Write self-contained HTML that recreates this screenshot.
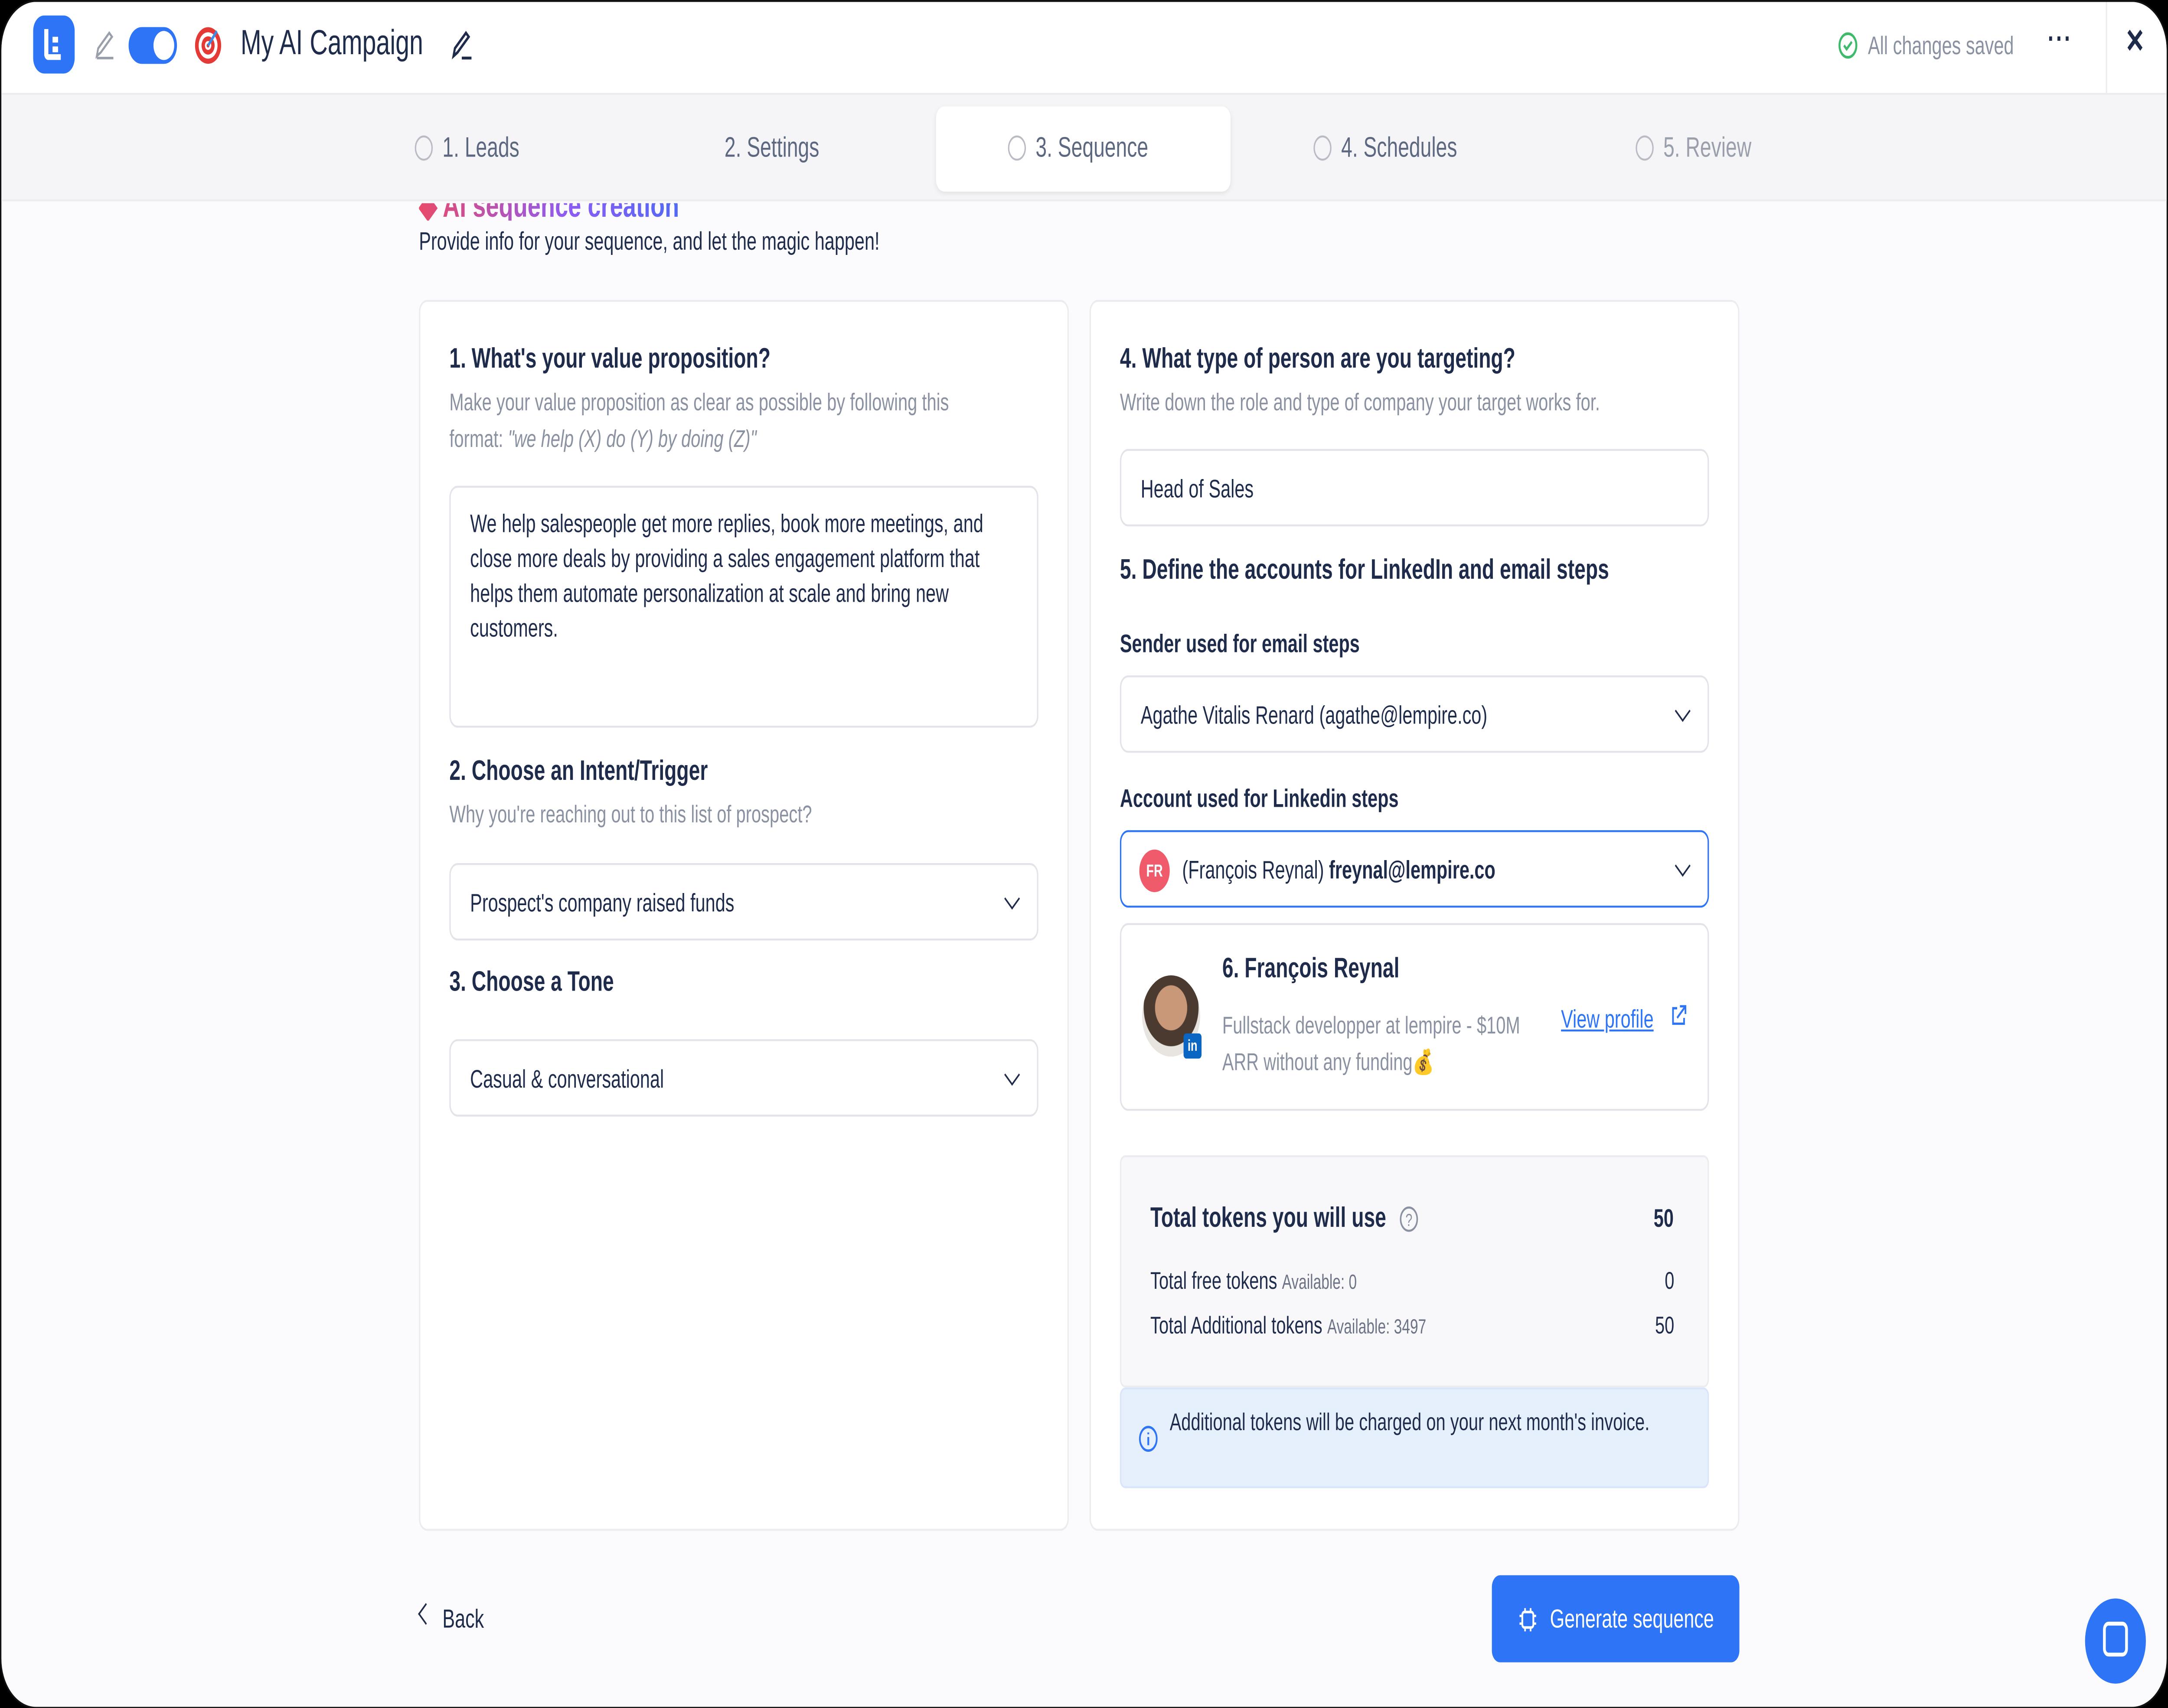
<!DOCTYPE html>
<html><head><meta charset="utf-8"><style>
*{box-sizing:border-box;margin:0;padding:0}
html,body{width:100%;height:100%;overflow:hidden;background:#000}
#w{position:absolute;left:0;top:0;width:1568px;height:882.6px;transform:scale(4.46429);transform-origin:0 0;font-family:"Liberation Sans",sans-serif;color:#1e2b4a}
#frame{position:absolute;left:0;top:0;width:1568px;height:882.6px;background:#fbfafc;border-radius:26px;overflow:hidden;border:1.5px solid #111}
.a{position:absolute}
.top{left:0;top:0;width:1568px;height:48px;background:#fff;border-bottom:1px solid #ececf0}
.steps{left:0;top:48px;width:1568px;height:55px;background:#f5f4f7;border-bottom:1px solid #ededf0}
.st{position:absolute;top:68px;font-size:14.5px;color:#5d6880}
.circ{display:inline-block;width:13px;height:13px;border:1.3px solid #b9bcc4;border-radius:50%;vertical-align:-2px;margin-right:7px}
.card{background:#fff;border:1px solid #ececf0;border-radius:6px}
.h{font-size:14.5px;font-weight:bold;color:#1e2b4a}
.sub{font-size:12.5px;color:#8a91a0;line-height:19px}
.inp{background:#fff;border:1px solid #e3e4e9;border-radius:6px;font-size:13px;color:#1e2b4a}
.chev{position:absolute;right:14px;top:50%;width:8px;height:8px;border-right:1.8px solid #1e2b4a;border-bottom:1.8px solid #1e2b4a;transform:translateY(-70%) rotate(45deg)}
.lbl{font-size:13px;font-weight:bold;color:#1e2b4a}
</style></head><body><div id="w"><div id="frame">
<div class="a top"></div>
<div class="a" style="left:23px;top:7px;width:30px;height:30px;background:#2d74f6;border-radius:8px"></div>
<div class="a" style="left:31px;top:14px;height:16px;border-left:3px solid #fff;border-bottom:3px solid #fff;width:12px;border-radius:0 0 0 3px"></div>
<div class="a" style="left:37px;top:18px;width:4px;height:3px;background:#fff"></div><div class="a" style="left:37px;top:23px;width:4px;height:3px;background:#fff"></div>
<svg class="a" style="left:66px;top:13px" width="18" height="18" viewBox="0 0 18 18"><path d="M3 15 L4 11 L12 3 L14 5 L6 13 Z M3 16 H15" fill="none" stroke="#9aa0ab" stroke-width="1.3"/></svg>
<div class="a" style="left:92px;top:13px;width:35px;height:19px;background:#2d74f6;border-radius:10px"></div>
<div class="a" style="left:110px;top:15px;width:15px;height:15px;background:#fff;border-radius:50%"></div>
<svg class="a" style="left:139px;top:12px" width="21" height="21" viewBox="0 0 20 20"><circle cx="10" cy="10" r="9" fill="#e53935"/><circle cx="10" cy="10" r="6.5" fill="#fff"/><circle cx="10" cy="10" r="4.5" fill="#e53935"/><circle cx="10" cy="10" r="2.2" fill="#fff"/><circle cx="10" cy="10" r="1" fill="#e53935"/><path d="M10 10 L16 3" stroke="#3a8ee6" stroke-width="1.5"/></svg>
<div class="a" style="left:173px;top:11px;font-size:18px;color:#1e2b4a">My AI Campaign</div>
<svg class="a" style="left:324px;top:13px" width="18" height="18" viewBox="0 0 18 18"><path d="M3 15 L4 11 L12 3 L14 5 L6 13 Z M9 16 H16" fill="none" stroke="#1e2b4a" stroke-width="1.5"/></svg>
<svg class="a" style="left:1328px;top:15px" width="15" height="15" viewBox="0 0 16 16"><circle cx="8" cy="8" r="6.5" fill="none" stroke="#3dbb6b" stroke-width="1.5"/><path d="M5 8 L7 10 L11 6" fill="none" stroke="#3dbb6b" stroke-width="1.5"/></svg>
<div class="a" style="left:1350px;top:15px;font-size:13px;color:#8a91a0">All changes saved</div>
<div class="a" style="left:1480px;top:11px;font-size:15px;color:#1e2b4a;letter-spacing:1px;font-weight:bold">···</div>
<div class="a" style="left:1522px;top:0;width:1px;height:48px;background:#ececf0"></div>
<div class="a" style="left:1536px;top:11px;font-size:17px;color:#1e2b4a;font-weight:bold">✕</div>

<div class="a steps"></div>
<div class="a" style="left:676px;top:54px;width:213px;height:44px;background:#fff;border-radius:6px;box-shadow:0 1px 3px rgba(0,0,0,.08)"></div>
<div class="st" style="left:299px"><span class="circ"></span>1. Leads</div>
<div class="st" style="left:523px">2. Settings</div>
<div class="st" style="left:728px"><span class="circ"></span>3. Sequence</div>
<div class="st" style="left:949px"><span class="circ"></span>4. Schedules</div>
<div class="st" style="left:1182px;color:#9aa0ab"><span class="circ"></span>5. Review</div>

<div class="a" style="left:302px;top:104px;height:9px;overflow:hidden;width:220px"><div style="margin-top:-8px;font-size:17px;font-weight:bold;background:linear-gradient(90deg,#e84a6a,#8b5cf6,#3b6ff6);-webkit-background-clip:text;color:transparent">◆ AI sequence creation</div></div>
<div class="a" style="left:302px;top:116px;font-size:13px;color:#1e2b4a">Provide info for your sequence, and let the magic happen!</div>

<div class="a card" style="left:302px;top:154px;width:470px;height:636px"></div>
<div class="a h" style="left:324px;top:177px">1. What's your value proposition?</div>
<div class="a sub" style="left:324px;top:198px;width:400px">Make your value proposition as clear as possible by following this format: <i>"we help (X) do (Y) by doing (Z)"</i></div>
<div class="a inp" style="left:324px;top:250px;width:426px;height:125px;padding:10px 14px;line-height:18px">We help salespeople get more replies, book more meetings, and close more deals by providing a sales engagement platform that helps them automate personalization at scale and bring new customers.</div>
<div class="a h" style="left:324px;top:390px">2. Choose an Intent/Trigger</div>
<div class="a sub" style="left:324px;top:411px">Why you're reaching out to this list of prospect?</div>
<div class="a inp" style="left:324px;top:445px;width:426px;height:40px;padding:12px 14px">Prospect's company raised funds<div class="chev"></div></div>
<div class="a h" style="left:324px;top:499px">3. Choose a Tone</div>
<div class="a inp" style="left:324px;top:536px;width:426px;height:40px;padding:12px 14px">Casual &amp; conversational<div class="chev"></div></div>

<div class="a card" style="left:787px;top:154px;width:470px;height:636px"></div>
<div class="a h" style="left:809px;top:177px">4. What type of person are you targeting?</div>
<div class="a sub" style="left:809px;top:198px">Write down the role and type of company your target works for.</div>
<div class="a inp" style="left:809px;top:231px;width:426px;height:40px;padding:12px 14px">Head of Sales</div>
<div class="a h" style="left:809px;top:286px">5. Define the accounts for LinkedIn and email steps</div>
<div class="a lbl" style="left:809px;top:324px">Sender used for email steps</div>
<div class="a inp" style="left:809px;top:348px;width:426px;height:40px;padding:12px 14px">Agathe Vitalis Renard (agathe@lempire.co)<div class="chev"></div></div>
<div class="a lbl" style="left:809px;top:404px">Account used for Linkedin steps</div>
<div class="a inp" style="left:809px;top:428px;width:426px;height:40px;padding:12px 14px 12px 44px;border-color:#2d74f6">(François Reynal) <b>freynal@lempire.co</b><div class="chev"></div></div>
<div class="a" style="left:823px;top:438px;width:22px;height:22px;border-radius:50%;background:#ef5b6b;color:#fff;font-size:9px;font-weight:bold;text-align:center;line-height:22px">FR</div>
<div class="a inp" style="left:809px;top:476px;width:426px;height:97px"></div>
<div class="a" style="left:825px;top:503px;width:42px;height:42px;border-radius:50%;background:radial-gradient(circle at 50% 40%,#c89878 0 35%,#4a3a30 36% 60%,#e8e4e0 61%)"></div>
<div class="a" style="left:855px;top:533px;width:13px;height:13px;background:#0a66c2;border-radius:2px;color:#fff;font-size:8px;font-weight:bold;text-align:center;line-height:13px">in</div>
<div class="a h" style="left:883px;top:492px">6. François Reynal</div>
<div class="a sub" style="left:883px;top:520px;width:240px;font-size:12.5px">Fullstack developper at lempire - $10M ARR without any funding💰</div>
<div class="a" style="left:1128px;top:518px;font-size:13px;color:#2d74f6;text-decoration:underline">View profile</div>
<svg class="a" style="left:1207px;top:518px" width="12" height="12" viewBox="0 0 12 12"><path d="M5 2 H2 V10 H10 V7 M7 1 H11 V5 M11 1 L5 7" fill="none" stroke="#2d74f6" stroke-width="1.2"/></svg>

<div class="a" style="left:809px;top:596px;width:426px;height:120px;background:#f8f8fa;border:1px solid #ececf0;border-radius:4px"></div>
<div class="a h" style="left:831px;top:621px">Total tokens you will use</div>
<svg class="a" style="left:1011px;top:622px" width="14" height="14" viewBox="0 0 14 14"><circle cx="7" cy="7" r="6" fill="none" stroke="#8a91a0" stroke-width="1.1"/><text x="7" y="10.5" font-size="9" text-anchor="middle" fill="#8a91a0" font-family="Liberation Sans">?</text></svg>
<div class="a h" style="left:1195px;top:621px;font-size:13px">50</div>
<div class="a" style="left:831px;top:654px;font-size:12.5px">Total free tokens <span style="font-size:10.5px;color:#6b7385">Available: 0</span></div>
<div class="a" style="left:1203px;top:654px;font-size:12.5px">0</div>
<div class="a" style="left:831px;top:677px;font-size:12.5px">Total Additional tokens <span style="font-size:10.5px;color:#6b7385">Available: 3497</span></div>
<div class="a" style="left:1196px;top:677px;font-size:12.5px">50</div>
<div class="a" style="left:809px;top:716px;width:426px;height:52px;background:#e6f0fd;border-radius:4px;border:1px solid #d8e5fa"></div>
<svg class="a" style="left:822px;top:735px" width="15" height="15" viewBox="0 0 16 16"><circle cx="8" cy="8" r="6.5" fill="none" stroke="#2d74f6" stroke-width="1.3"/><path d="M8 7 V11.5 M8 4.5 V5.5" stroke="#2d74f6" stroke-width="1.4"/></svg>
<div class="a" style="left:845px;top:725px;width:370px;font-size:12.5px;line-height:19px">Additional tokens will be charged on your next month's invoice.</div>

<div class="a" style="left:303px;top:829px;width:8px;height:8px;border-left:1.6px solid #1e2b4a;border-bottom:1.6px solid #1e2b4a;transform:rotate(45deg)"></div>
<div class="a" style="left:319px;top:828px;font-size:13.5px">Back</div>
<div class="a" style="left:1078px;top:813px;width:179px;height:45px;background:#2d74f6;border-radius:6px;color:#fff;font-size:13.5px;line-height:45px;padding-left:42px">Generate sequence</div>
<svg class="a" style="left:1097px;top:829px" width="14" height="14" viewBox="0 0 14 14"><rect x="3" y="3" width="8" height="8" rx="1.5" fill="none" stroke="#fff" stroke-width="1.3"/><path d="M5 1V3M9 1V3M5 11V13M9 11V13M1 5H3M1 9H3M11 5H13M11 9H13" stroke="#fff" stroke-width="1.2"/></svg>
<div class="a" style="left:1507px;top:825px;width:44px;height:44px;border-radius:50%;background:#2d74f6"></div>
<div class="a" style="left:1520px;top:837px;width:18px;height:18px;border:2px solid #fff;border-radius:4px"></div>
</div></div>
<script>
(function(){var w=document.getElementById('w');function f(){var vw=window.innerWidth||7000,vh=window.innerHeight||3940;w.style.transform='scale('+(vw/1568)+','+(vh/882.6)+')';}f();window.addEventListener('resize',f);})();
</script>
</body></html>
